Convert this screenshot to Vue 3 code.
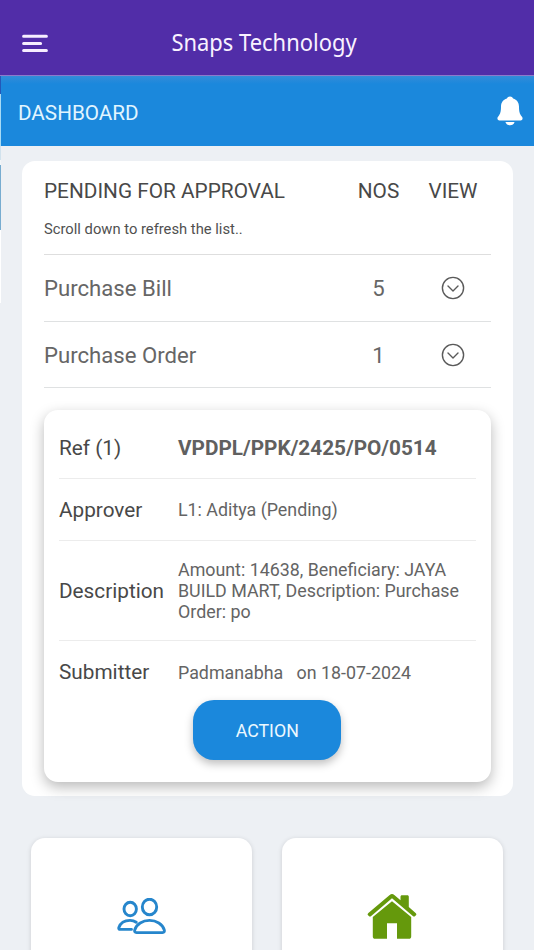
<script setup>
const pending = [
  { name: 'Purchase Bill', count: 5 },
  { name: 'Purchase Order', count: 1 },
]
</script>

<template>
  <div class="screen">
    <i class="edge"></i>
    <header class="topbar">
      <svg class="menu" viewBox="0 0 26 19" fill="none" stroke="#f6eeff" stroke-width="3" stroke-linecap="round">
        <path d="M1.600 2.200H24.400M1.600 9.400H18.600M1.600 16.600H24.400" />
      </svg>
      <h1 class="brand">Snaps Technology</h1>
      <span></span>
    </header>
    <div class="subbar">
      <h2 class="page">DASHBOARD</h2>
      <svg class="bell" viewBox="0 0 26 30" fill="#fff">
        <path d="M13 .5c-1.500 0-2.600.8-3.100 2C6 3.700 4 6.700 4 10.600c0 5-.7 7.400-2.400 9.500C.5 21.500.3 22 .5 23c.2.900.8 1.400 1.900 1.400h21.200c1.100 0 1.700-.5 1.900-1.400.2-1 0-1.500-1.100-2.900-1.700-2.100-2.400-4.500-2.400-9.500 0-3.900-2-6.900-5.900-8.100-.5-1.200-1.600-2-3.100-2z" />
        <path d="M8.400 26h9.200c-.6 2-2.300 3.300-4.600 3.300S9 28 8.400 26z" />
      </svg>
    </div>

    <main class="content">
      <section class="panel">
        <div class="row head">
          <span>PENDING FOR APPROVAL</span>
          <span class="num">NOS</span>
          <span class="view">VIEW</span>
        </div>
        <p class="hint">Scroll down to refresh the list..</p>
        <div v-for="item in pending" :key="item.name" class="row item">
          <span>{{ item.name }}</span>
          <span class="num">{{ item.count }}</span>
          <span class="view">
            <svg class="chev" viewBox="0 0 24 24" fill="none" stroke="#5a5a5a" stroke-width="1.400" stroke-linecap="round" stroke-linejoin="round">
              <circle cx="12" cy="12" r="10.600" />
              <path d="M7 10.100 12 15.100 17 10.100" />
            </svg>
          </span>
        </div>

        <article class="detail">
          <div class="field ref">
            <span class="label">Ref (1)</span>
            <strong class="refno">VPDPL/PPK/2425/PO/0514</strong>
          </div>
          <div class="field approver">
            <span class="label">Approver</span>
            <span class="value">L1: Aditya (Pending)</span>
          </div>
          <div class="field desc">
            <span class="label">Description</span>
            <span class="value">Amount: 14638, Beneficiary: JAYA<br>BUILD MART, Description: Purchase<br>Order: po</span>
          </div>
          <div class="field submitter">
            <span class="label">Submitter</span>
            <span class="value">Padmanabha&nbsp;&nbsp; on 18-07-2024</span>
          </div>
          <button class="action">ACTION</button>
        </article>
      </section>

      <nav class="tiles">
        <div class="tile">
          <svg class="people" viewBox="0 0 50 38" fill="none" stroke="#2686cc" stroke-width="2.900" stroke-linecap="round" stroke-linejoin="round">
            <ellipse cx="13.200" cy="11" rx="6.200" ry="6.800" />
            <ellipse cx="32.500" cy="9" rx="7.200" ry="7.800" />
            <path d="M19.200 24.200C17.500 23 15.400 22.400 13 22.400c-5.200 0-9.600 2.800-11.100 7.100-.4 1.100.2 1.900 1.200 1.900h11.400" />
            <path d="M32.500 22.400c-7 0-12.900 3.700-14.700 9.300-.6 1.800.1 2.900 1.700 2.900h26c1.600 0 2.300-1.100 1.700-2.900-1.800-5.600-7.700-9.300-14.700-9.300z" />
          </svg>
        </div>
        <div class="tile">
          <svg class="home" viewBox="0 0 50 48" fill="#65990c">
            <path d="M25 8.300 44.200 24v19.500c0 1.500-.9 2.300-2.300 2.300H30V30.300H20v15.500H8.100c-1.400 0-2.300-.8-2.300-2.300V24z" />
            <path d="M22.700 2c1.500-1.400 3.100-1.400 4.600 0l6.200 5.200V3.800c0-1.100.5-1.600 1.500-1.600h5.300c1 0 1.500.5 1.500 1.600V14l6.800 5.900c1 .9 1 1.500.3 2.300l-.7.7c-.8.8-1.500.8-2.400.1L25 5.300 4.200 23c-.9.700-1.600.7-2.400-.1l-.7-.7c-.7-.8-.7-1.400.3-2.300z" />
          </svg>
        </div>
      </nav>
    </main>
  </div>
</template>

<style>
body { margin: 0; }
</style>

<style scoped>
.screen {
  position: relative;
  width: 534px;
  height: 950px;
  overflow: hidden;
  display: flex;
  flex-direction: column;
  background: #edf0f4;
  font-family: Roboto, sans-serif;
  color: #484848;
}
.edge {
  position: absolute;
  left: 0;
  top: 76px;
  width: 1px;
  height: 227px;
  background: linear-gradient(#2358b9 0 18px, #a8dbf5 18px 70px, #d1e2ed 70px 84px, #f3f6f8 84px 89px, #77acd0 89px 154px, #fff 154px);
}
.topbar {
  box-sizing: border-box;
  flex: none;
  height: 76px;
  padding: 12px 22px 0;
  display: grid;
  grid-template-columns: 26px 1fr 32px;
  align-items: center;
  background: #512da8;
  border-bottom: 1px solid #8d7acb;
}
.menu { width: 26px; height: 19px; margin-top: -1px; }
.brand {
  margin: -3px 0 0;
  text-align: center;
  font: 400 23.600px/30px "Noto Sans", sans-serif;
  color: #f9f2ff;
  white-space: nowrap;
  transform: scaleX(.93);
}
.subbar {
  box-sizing: border-box;
  flex: none;
  height: 70px;
  padding: 0 11px 0 18px;
  display: flex;
  align-items: center;
  justify-content: space-between;
  background: linear-gradient(#338cd9, #1b88dc 8px);
}
.page { margin: 4px 0 0; font-size: 20.700px; font-weight: 400; line-height: 24px; color: #e2f5ff; }
.bell { width: 26px; height: 30px; }
.content { flex: 1; min-height: 0; padding: 15px 21.500px 0 22px; }
.panel {
  box-sizing: border-box;
  height: 635px;
  padding: 0 22px;
  border-radius: 13px;
  background: #fff;
}
.row {
  display: grid;
  grid-template-columns: 1fr 74px 75px;
  align-items: center;
}
.num, .view { text-align: center; }
.head { height: 59px; font-size: 20.800px; color: #484848; white-space: nowrap; }
.hint {
  box-sizing: border-box;
  height: 35px;
  margin: 0;
  border-bottom: 1.500px solid #dedede;
  font-size: 14.750px;
  line-height: 18px;
  color: #505050;
}
.item {
  box-sizing: border-box;
  height: 66.500px;
  padding-top: 1px;
  border-bottom: 1.500px solid #dfe1e2;
  font-size: 22.150px;
  color: #666;
}
.item + .item { padding-top: 2px; }
.chev { display: block; width: 24px; height: 24px; margin: 0 auto 0 25px; }
.detail {
  box-sizing: border-box;
  height: 371.500px;
  margin-top: 22px;
  padding: 0 15px;
  border-radius: 14px;
  background: #fff;
  box-shadow: 0 5px 14px rgba(0, 0, 0, .28);
  display: flex;
  flex-direction: column;
}
.field {
  box-sizing: border-box;
  display: grid;
  grid-template-columns: 119px 1fr;
  align-items: center;
  border-bottom: 1.500px solid #ececec;
  white-space: nowrap;
}
.ref { height: 69px; padding-top: 8px; }
.approver { height: 62px; padding-top: 1px; }
.desc { height: 100px; padding-top: 2px; }
.submitter { height: 59px; border: 0; padding-top: 4px; }
.desc .label, .submitter .label { margin-top: -2px; }
.label { font-size: 20.750px; color: #484848; }
.refno { font-size: 20.750px; color: #606060; }
.value { font-size: 17.840px; line-height: 20.700px; color: #646464; }
.approver .value, .submitter .value { padding-top: 1px; }
.action {
  flex: none;
  align-self: center;
  width: 148px;
  height: 60px;
  padding: 2px 0 0;
  border: 0;
  border-radius: 21px;
  background: #1b88dc;
  box-shadow: 0 4px 9px rgba(0, 0, 0, .25);
  font: 400 17.800px/22px Roboto, sans-serif;
  color: #ecf8ff;
}
.tiles {
  display: grid;
  grid-template-columns: 221px 221px;
  gap: 30px;
  padding: 42px 0 0 9px;
}
.tile {
  box-sizing: border-box;
  height: 180px;
  padding-top: 55px;
  border-radius: 14px;
  background: #fff;
  box-shadow: 0 1px 5px rgba(0, 0, 0, .14);
}
.people { display: block; width: 50px; height: 38px; margin: 5px auto 0; }
.home { display: block; width: 50px; height: 48px; margin: 0 0 0 85px; }
</style>
